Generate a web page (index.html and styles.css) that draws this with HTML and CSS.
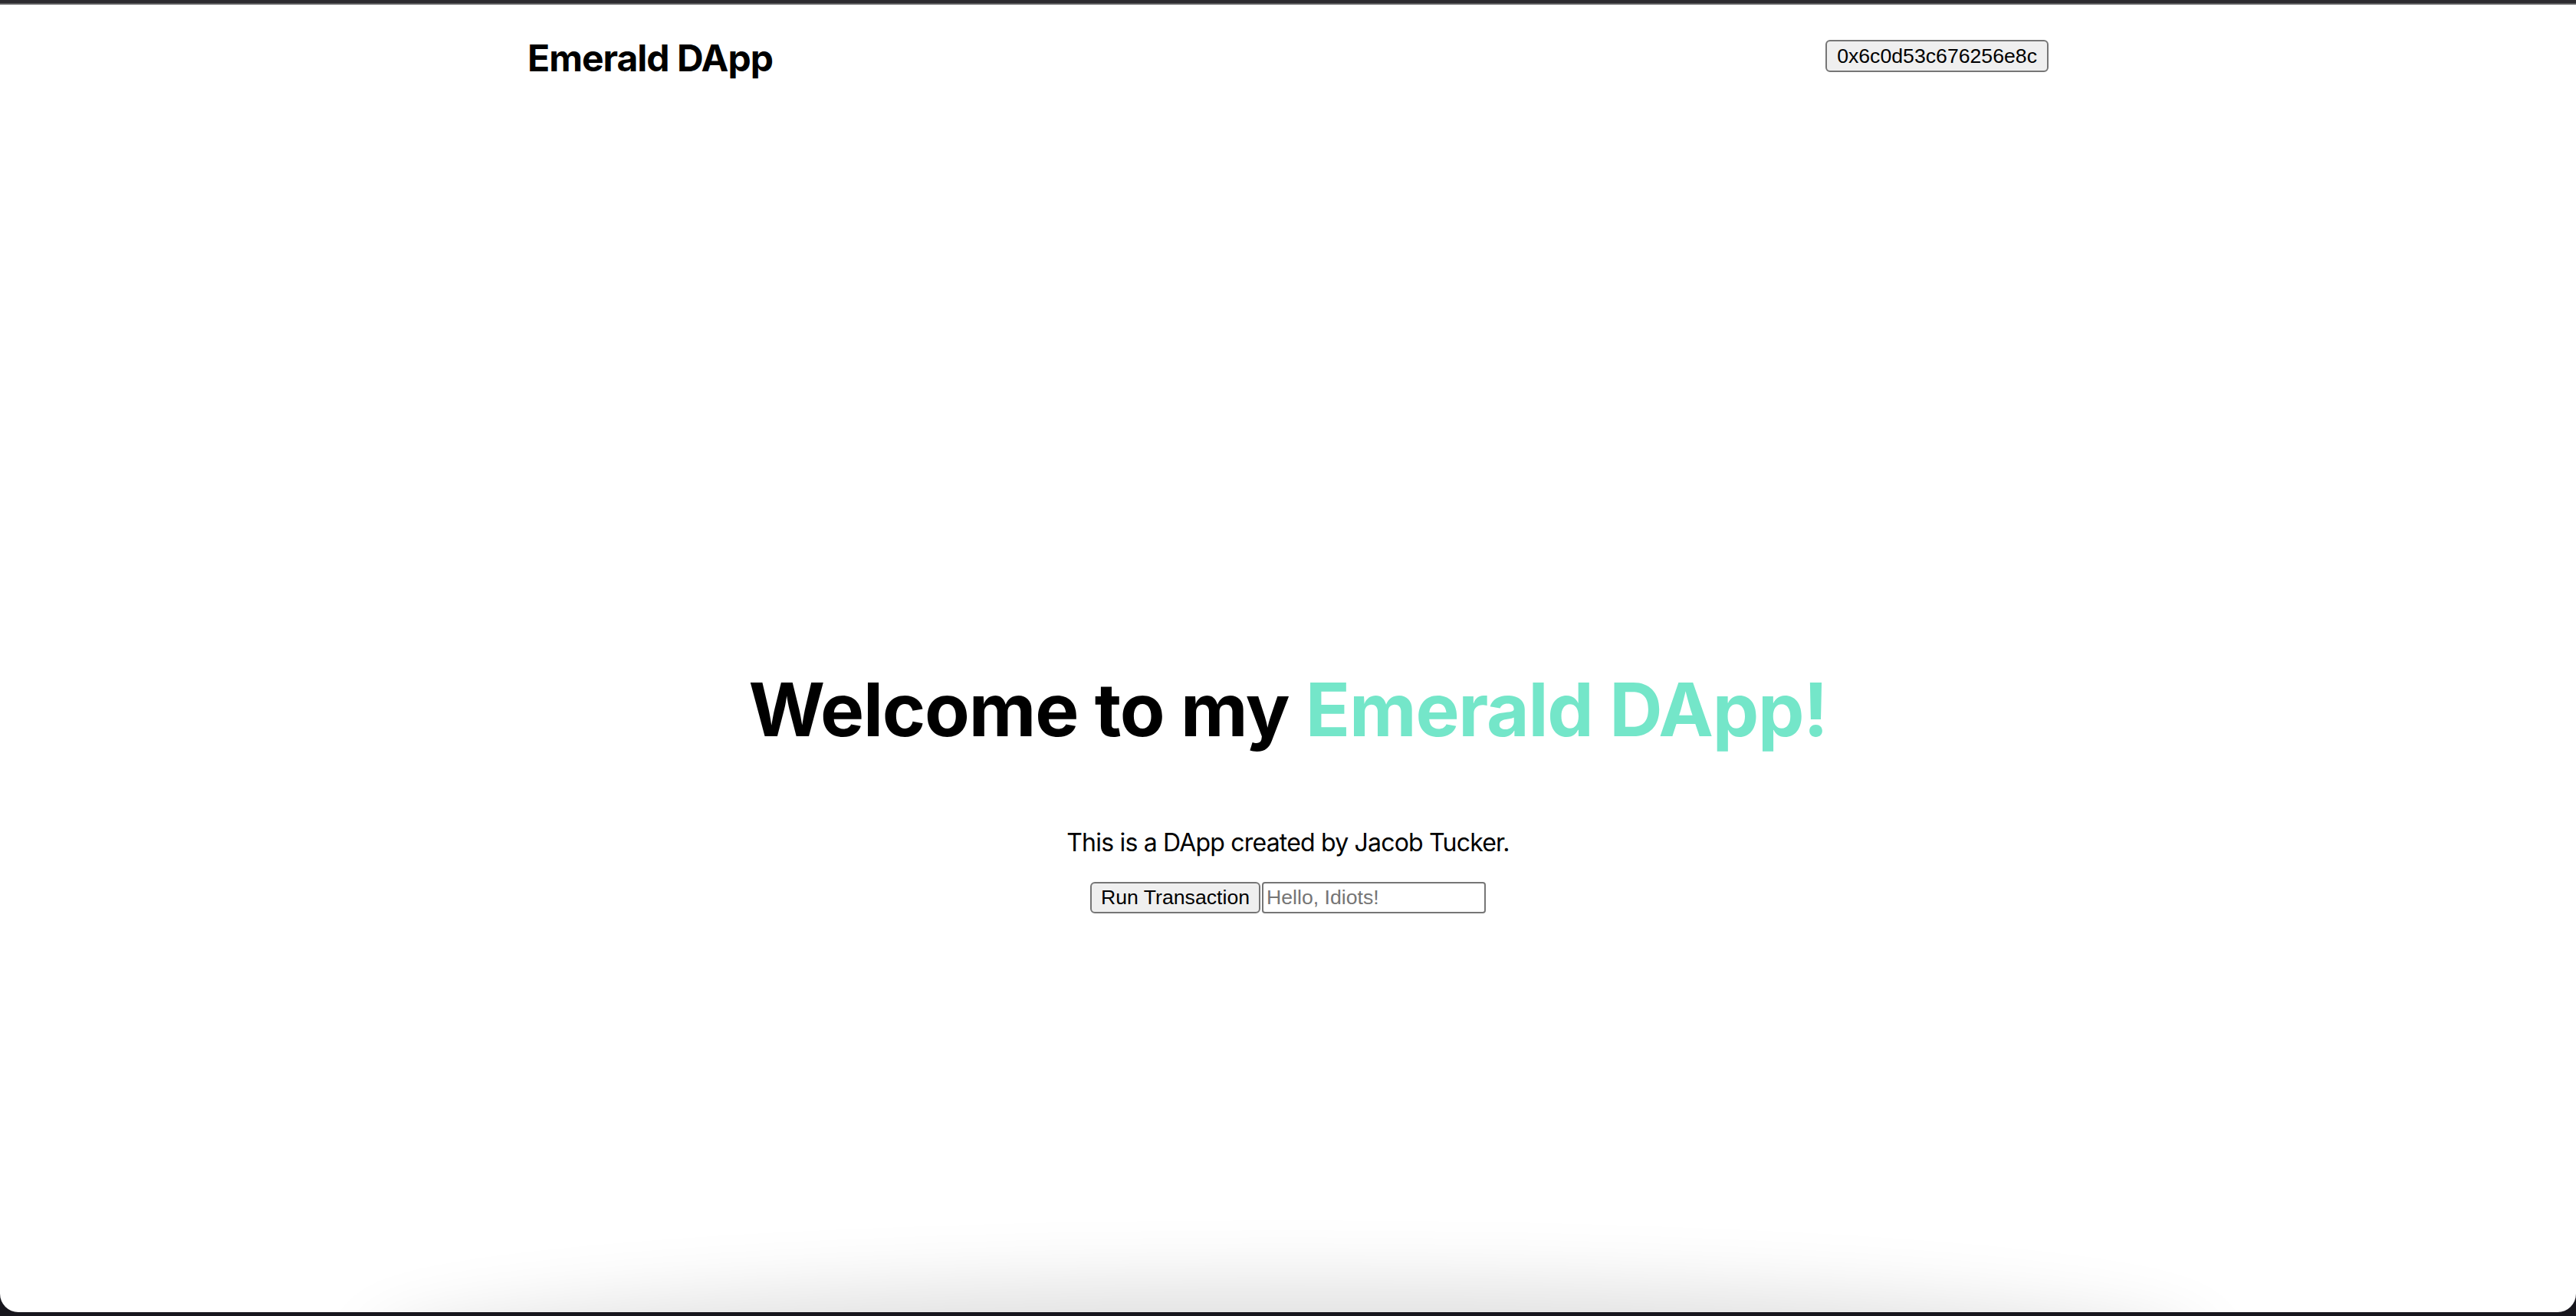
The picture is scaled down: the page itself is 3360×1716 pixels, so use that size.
FILE: index.html
```html
<!DOCTYPE html>
<html lang="en">
<head>
<meta charset="utf-8">
<title>Emerald DApp</title>
<link rel="stylesheet" href="styles.css">
</head>
<body>
<div class="window">
  <div class="titlebar"></div>
  <div class="viewport">
    <header class="nav">
      <h1 class="brand">Emerald DApp</h1>
      <button class="native-btn addr">0x6c0d53c676256e8c</button>
    </header>
    <main class="hero">
      <h1 class="headline">Welcome to my <span class="accent">Emerald DApp!</span></h1>
      <p class="byline">This is a DApp created by Jacob Tucker.</p>
      <div class="actions">
        <button class="native-btn run">Run Transaction</button><input class="msg" type="text" placeholder="Hello, Idiots!">
      </div>
    </main>
    <div class="dock-shadow"></div>
  </div>
</div>
</body>
</html>
```
FILE: styles.css
```css
html, body {
  margin: 0;
  padding: 0;
  background: #17161d;
}

.window {
  width: 3360px;
  height: 1716px;
  display: flex;
  flex-direction: column;
  overflow: hidden;
}

.titlebar {
  height: 4px;
  background: #2c2b2f;
  border-bottom: 2px solid #5c5c5e;
  flex: none;
}

.viewport {
  flex: 1;
  position: relative;
  overflow: hidden;
  background: #ffffff;
  border-radius: 0 0 24px 24px;
  margin-bottom: 5px;
  font-family: Inter, "Noto Sans", sans-serif;
  color: #000;
}

.nav {
  width: 1984px;
  margin: 0 auto;
  padding-top: 46px;
  display: flex;
  justify-content: space-between;
  align-items: flex-start;
}

.brand {
  margin: 0;
  padding-top: 3px;
  font-size: 48px;
  font-weight: 700;
  line-height: 42px;
  letter-spacing: -1px;
}

.native-btn {
  box-sizing: border-box;
  height: 42px;
  padding: 2px 13px;
  font-family: "Liberation Sans", Arial, sans-serif;
  font-size: 26.67px;
  color: #000;
  background: #efefef;
  border: 2px solid #767676;
  border-radius: 6px;
}

.hero {
  padding-top: 771px;
  text-align: center;
}

.headline {
  margin: 0 0 97px;
  font-size: 96px;
  font-weight: 700;
  line-height: 115px;
  letter-spacing: -1.2px;
}

.accent {
  color: #74e6c9;
}

.byline {
  margin: 0 0 32px;
  font-size: 32px;
  line-height: 38px;
  letter-spacing: -0.8px;
}

.actions {
  display: flex;
  justify-content: center;
  gap: 2px;
}

.run {
  height: 41px;
  padding: 2px 12px;
}

.msg {
  box-sizing: border-box;
  width: 292px;
  height: 41px;
  padding: 2px 4px;
  margin: 0;
  font-family: "Liberation Sans", Arial, sans-serif;
  font-size: 26.67px;
  border: 2px solid #767676;
  border-radius: 4px;
  background: #fff;
}

.msg::placeholder {
  color: #757575;
}

.dock-shadow {
  position: absolute;
  left: 520px;
  right: 520px;
  bottom: -110px;
  height: 110px;
  border-radius: 50%;
  box-shadow: 0 0 90px 40px rgba(0, 0, 0, 0.12);
}
```
